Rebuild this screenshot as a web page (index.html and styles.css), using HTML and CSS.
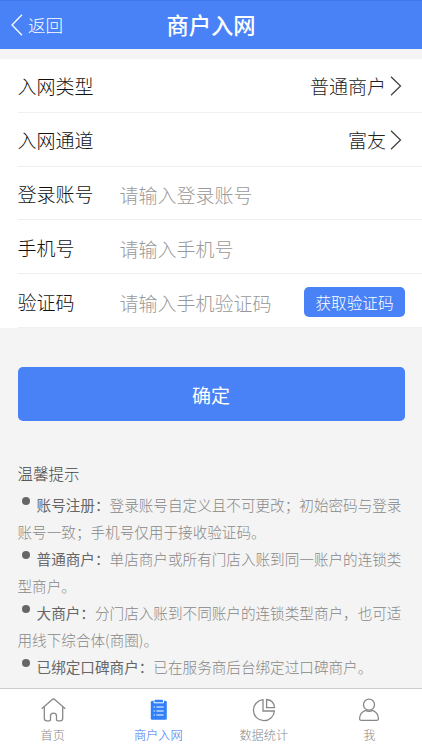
FILE: index.html
```html
<!DOCTYPE html>
<html lang="zh-CN">
<head>
<meta charset="utf-8">
<meta name="viewport" content="width=device-width, initial-scale=1">
<title>商户入网</title>
<link rel="stylesheet" href="styles.css">
</head>
<body>
<div class="page">
  <header class="header">
    <a class="back"><svg width="12" height="22" viewBox="0 0 12 22"><path d="M11 .7 1 11l10 10.3"/></svg><span>返回</span></a>
    <h1 class="title">商户入网</h1>
  </header>
  <main class="content">
    <section class="form">
      <div class="row"><span class="label">入网类型</span><span class="value">普通商户</span><svg class="arrow" width="12" height="20" viewBox="0 0 12 20"><path d="M1 .7 10.5 10 1 19.3"/></svg></div>
      <div class="row"><span class="label">入网通道</span><span class="value">富友</span><svg class="arrow" width="12" height="20" viewBox="0 0 12 20"><path d="M1 .7 10.5 10 1 19.3"/></svg></div>
      <div class="row"><span class="label">登录账号</span><span class="hint">请输入登录账号</span></div>
      <div class="row"><span class="label">手机号</span><span class="hint">请输入手机号</span></div>
      <div class="row"><span class="label">验证码</span><span class="hint">请输入手机验证码</span><button class="code">获取验证码</button></div>
    </section>
    <button class="submit">确定</button>
    <section class="tips">
      <h2 class="tips-title">温馨提示</h2>
      <p class="tip"><i class="dot"></i><b>账号注册：</b>登录账号自定义且不可更改；初始密码与登录<br>账号一致；手机号仅用于接收验证码。</p>
      <p class="tip"><i class="dot"></i><b>普通商户：</b>单店商户或所有门店入账到同一账户的连锁类<br>型商户。</p>
      <p class="tip"><i class="dot"></i><b>大商户：</b>分门店入账到不同账户的连锁类型商户，也可适<br>用线下综合体(商圈)。</p>
      <p class="tip"><i class="dot"></i><b>已绑定口碑商户：</b>已在服务商后台绑定过口碑商户。</p>
    </section>
  </main>
  <nav class="tabs">
    <a class="tab"><svg width="26" height="24" viewBox="-.5 0 26 24"><path d="M1.2 10.7 11.8 1.5q1.2-1 2.4 0l10.6 9.2M3.8 9v11.2q0 2.6 2.6 2.6h2.4q1.2 0 1.2-1.2v-3.4q0-3 3-3t3 3v3.4q0 1.2 1.2 1.2h2.4q2.6 0 2.6-2.6V9"/></svg><span>首页</span></a>
    <a class="tab active"><svg width="26" height="24" viewBox="-.8 0 26 24"><rect class="solid" x="5" y="2.7" width="16" height="19" rx="1.5"/><path class="cut" d="M8.3 2.5v2.3h9.4V2.5M7.8 9h1.3M10.6 9h7.2M7.8 13h1.3M10.6 13h7.2M7.8 17h1.3M10.6 17h7.2"/><rect class="solid" x="9" y="1.8" width="8" height="2.2" rx=".5"/></svg><span>商户入网</span></a>
    <a class="tab"><svg width="26" height="24" viewBox="0 0 26 24"><path d="M12 1.7A10.5 10.5 0 1 0 23.4 13H12ZM15.6 1.5v8.2h7.9q-.4-7.4-7.9-8.2Z"/></svg><span>数据统计</span></a>
    <a class="tab"><svg width="26" height="24" viewBox="0 0 26 24"><circle cx="13" cy="6.7" r="5.5"/><path d="M9.4 12.4Q4 14.6 3.6 20.2q-.1 2.2 1.8 2.2h15.2q1.9 0 1.8-2.2-.4-5.6-5.8-7.8-3.6 1.8-7.2 0"/></svg><span>我</span></a>
  </nav>
</div>
</body>
</html>
```
FILE: styles.css
```css
* { box-sizing: border-box; }
body {
  margin: 0;
  background: #f4f4f4;
  font-family: "Noto Sans CJK SC", sans-serif;
  font-weight: 300;
  color: #111;
}
h1, h2, p { margin: 0; font-weight: inherit; }
button { border: 0; padding: 0; font-family: inherit; font-weight: 400; color: #fff; background: #4982f7; }
svg { display: block; flex: none; fill: none; stroke: currentColor; stroke-width: 1.3; }
.page { height: 750px; display: flex; flex-direction: column; overflow: hidden; }
.header {
  flex: none;
  height: 49px;
  display: grid;
  grid-template-columns: 1fr auto 1fr;
  align-items: center;
  padding: 0 11px;
  background: #4982f7;
  border-top: 1px solid #3e78ee;
  color: #fff;
}
.back { display: flex; align-items: center; gap: 5px; font-size: 17.5px; line-height: 26px; }
.title { font-size: 22.3px; line-height: 30px; font-weight: 500; margin-top: -2px; }
.content { flex: 1; padding-top: 10px; }
.form { background: #fff; padding-left: 17.5px; }
.row {
  height: 53.8px;
  display: flex;
  align-items: center;
  padding: 1px 17px 0 0;
  border-bottom: 1px solid #efefef;
  font-size: 19px;
  line-height: 28px;
}
.label { width: 102px; padding-top: 1px; }
.value { flex: 1; text-align: right; color: #222; padding-top: 1px; }
.arrow { margin: 0 3px 0 4px; color: #444; }
.hint { flex: 1; color: #999; padding-top: 3px; }
.code { width: 101px; height: 30px; border-radius: 5px; font-size: 15.6px; font-weight: 300; line-height: 30px; margin-top: 1px; }
.submit {
  display: block;
  width: 387px;
  height: 54px;
  margin: 39.5px 0 0 17.5px;
  border-radius: 5px;
  font-size: 19px;
}
.tips { padding: 38.7px 0 0 17.5px; color: #888; }
.tips-title { font-size: 15.5px; line-height: 27px; margin-bottom: 4px; color: #444; }
.tip { font-size: 14.6px; line-height: 27px; white-space: nowrap; }
.tip b { font-weight: 400; color: #666; }
.dot {
  display: inline-block;
  width: 8px;
  height: 8px;
  margin: 0 6.2px 0 4.9px;
  border-radius: 50%;
  background: #666;
  vertical-align: 6px;
}
.tabs {
  flex: none;
  height: 62px;
  display: grid;
  grid-template-columns: repeat(4, 1fr);
  background: #fff;
  border-top: 1px solid #ccc;
}
.tab {
  display: flex;
  flex-direction: column;
  align-items: center;
  padding-top: 9px;
  gap: 4px;
  font-size: 12.2px;
  line-height: 18px;
  color: #888;
}
.active { color: #3873f0; }
.solid { fill: #2f80fa; stroke: none; }
.cut { stroke: #fff; stroke-width: 1; }
```
